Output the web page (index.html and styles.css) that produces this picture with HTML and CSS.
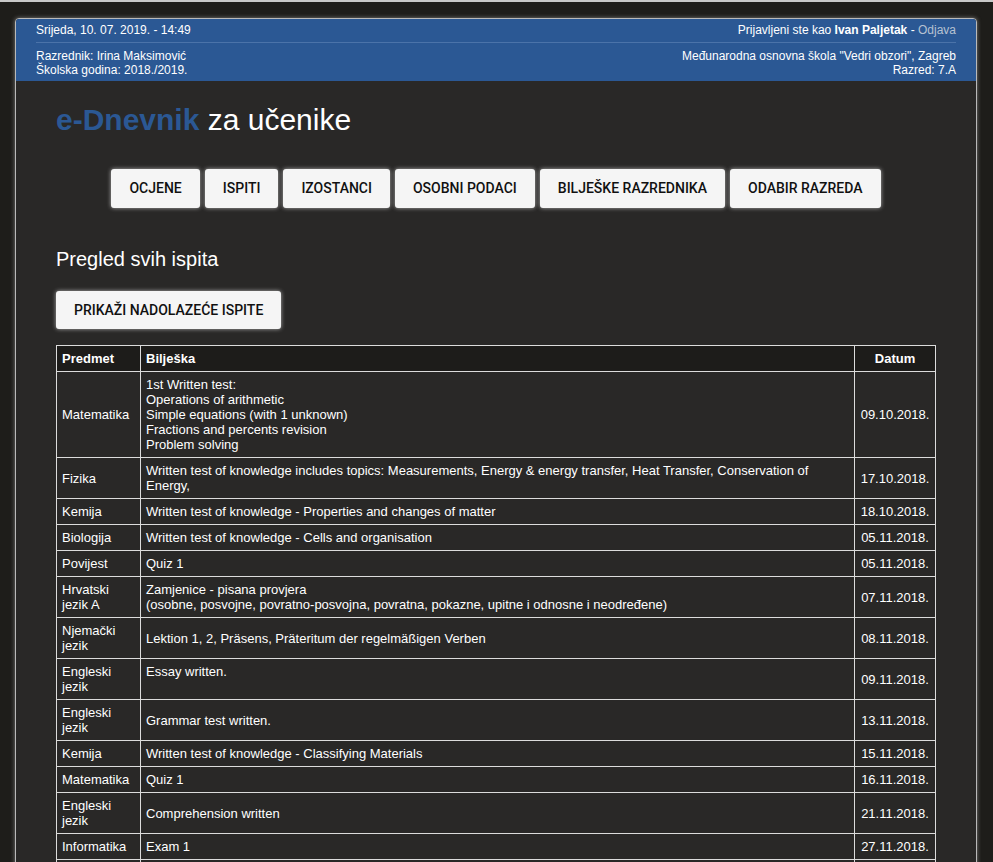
FILE: index.html
```html
<!DOCTYPE html>
<html lang="hr">
<head>
<meta charset="utf-8">
<title>e-Dnevnik za učenike</title>
<link rel="stylesheet" href="styles.css">
</head>
<body>
<div class="topline"></div>
<div class="frame">
  <header class="head">
    <div class="head-row head-top">
      <span>Srijeda, 10. 07. 2019. - 14:49</span>
      <span>Prijavljeni ste kao <b>Ivan Paljetak</b> - <a class="logout" href="#">Odjava</a></span>
    </div>
    <div class="head-row head-bottom">
      <div>Razrednik: Irina Maksimović<br>Školska godina: 2018./2019.</div>
      <div class="right">Međunarodna osnovna škola "Vedri obzori", Zagreb<br>Razred: 7.A</div>
    </div>
  </header>
  <main class="content">
    <h1 class="title"><span class="brand">e-Dnevnik</span> za učenike</h1>
    <nav class="nav">
      <a class="btn" href="#">Ocjene</a>
      <a class="btn" href="#">Ispiti</a>
      <a class="btn" href="#">Izostanci</a>
      <a class="btn" href="#">Osobni podaci</a>
      <a class="btn" href="#">Bilješke razrednika</a>
      <a class="btn" href="#">Odabir razreda</a>
    </nav>
    <h2 class="section">Pregled svih ispita</h2>
    <a class="btn btn-upcoming" href="#">Prikaži nadolazeće ispite</a>
    <table class="exams">
      <thead>
        <tr><th class="c-subj">Predmet</th><th class="c-note">Bilješka</th><th class="c-date">Datum</th></tr>
      </thead>
      <tbody>
        <tr><td>Matematika</td><td>1st Written test:<br>Operations of arithmetic<br>Simple equations (with 1 unknown)<br>Fractions and percents revision<br>Problem solving</td><td class="d">09.10.2018.</td></tr>
        <tr><td>Fizika</td><td>Written test of knowledge includes topics: Measurements, Energy &amp; energy transfer, Heat Transfer, Conservation of Energy,</td><td class="d">17.10.2018.</td></tr>
        <tr><td>Kemija</td><td>Written test of knowledge - Properties and changes of matter</td><td class="d">18.10.2018.</td></tr>
        <tr><td>Biologija</td><td>Written test of knowledge - Cells and organisation</td><td class="d">05.11.2018.</td></tr>
        <tr><td>Povijest</td><td>Quiz 1</td><td class="d">05.11.2018.</td></tr>
        <tr><td>Hrvatski jezik A</td><td>Zamjenice - pisana provjera<br>(osobne, posvojne, povratno-posvojna, povratna, pokazne, upitne i odnosne i neodređene)</td><td class="d">07.11.2018.</td></tr>
        <tr><td>Njemački jezik</td><td>Lektion 1, 2, Präsens, Präteritum der regelmäßigen Verben</td><td class="d">08.11.2018.</td></tr>
        <tr><td>Engleski jezik</td><td>Essay written.<br>&nbsp;</td><td class="d">09.11.2018.</td></tr>
        <tr><td>Engleski jezik</td><td>Grammar test written.</td><td class="d">13.11.2018.</td></tr>
        <tr><td>Kemija</td><td>Written test of knowledge - Classifying Materials</td><td class="d">15.11.2018.</td></tr>
        <tr><td>Matematika</td><td>Quiz 1</td><td class="d">16.11.2018.</td></tr>
        <tr><td>Engleski jezik</td><td>Comprehension written</td><td class="d">21.11.2018.</td></tr>
        <tr><td>Informatika</td><td>Exam 1</td><td class="d">27.11.2018.</td></tr>
        <tr><td>Matematika</td><td>Quiz 2</td><td class="d">28.11.2018.</td></tr>
        <tr><td>Povijest</td><td>Quiz 2</td><td class="d">03.12.2018.</td></tr>
      </tbody>
    </table>
  </main>
</div>
</body>
</html>
```
FILE: styles.css
```css
html, body {
  margin: 0;
  padding: 0;
  background: #1e1d1a;
}
body {
  font-family: "Liberation Sans", Arial, sans-serif;
  color: #fff;
}
.topline {
  height: 2px;
  background: #c8c8c8;
}
.frame {
  margin: 16px 0 0 15px;
  width: 960px;
  border: 1px solid #b9b9b9;
  border-radius: 4px 4px 0 0;
  background: #292827;
  box-shadow: 0 0 4px rgba(200, 200, 200, 0.55);
  overflow: hidden;
}
.head {
  background: #2b5894;
  padding: 0 20px;
  font-size: 12px;
  line-height: 14px;
}
.head-row {
  display: flex;
  justify-content: space-between;
}
.head-top {
  padding: 4px 0 5px;
  border-bottom: 1px solid #4b73a9;
}
.head-top b {
  font-weight: bold;
}
.logout {
  color: #b6c2d2;
  text-decoration: none;
}
.head-bottom {
  padding: 6px 0 4px;
}
.right {
  text-align: right;
}
.content {
  padding: 21px 40px 40px;
}
.title {
  margin: 0;
  font-size: 30px;
  font-weight: normal;
  line-height: 36px;
}
.brand {
  color: #2b5894;
  font-weight: bold;
}
.nav {
  display: flex;
  justify-content: center;
  gap: 5px;
  margin-top: 31px;
}
.btn {
  display: inline-block;
  height: 39px;
  line-height: 39px;
  padding: 0 18px;
  background: #f5f5f5;
  color: #111;
  border-radius: 3px;
  box-shadow: 0 0 4px rgba(230, 230, 230, 0.7);
  font-family: Roboto, "Liberation Sans", sans-serif;
  font-weight: 500;
  font-size: 14px;
  text-transform: uppercase;
  text-decoration: none;
}
.section {
  margin: 38px 0 0;
  font-size: 20px;
  font-weight: normal;
  line-height: 26px;
}
.btn-upcoming {
  margin-top: 19px;
  height: 38px;
  line-height: 38px;
}
.exams {
  margin-top: 16px;
  width: 880px;
  border-collapse: collapse;
  font-size: 13px;
  line-height: 15px;
}
.exams th, .exams td {
  border: 1px solid #dcdcdc;
  padding: 5px 5px;
  vertical-align: middle;
  text-align: left;
}
.exams thead th {
  background: #1d1c1a;
  font-weight: bold;
}
.c-subj { width: 73px; }
.c-date { width: 70px; }
.exams th.c-date, .exams td.d {
  text-align: center;
}
```
